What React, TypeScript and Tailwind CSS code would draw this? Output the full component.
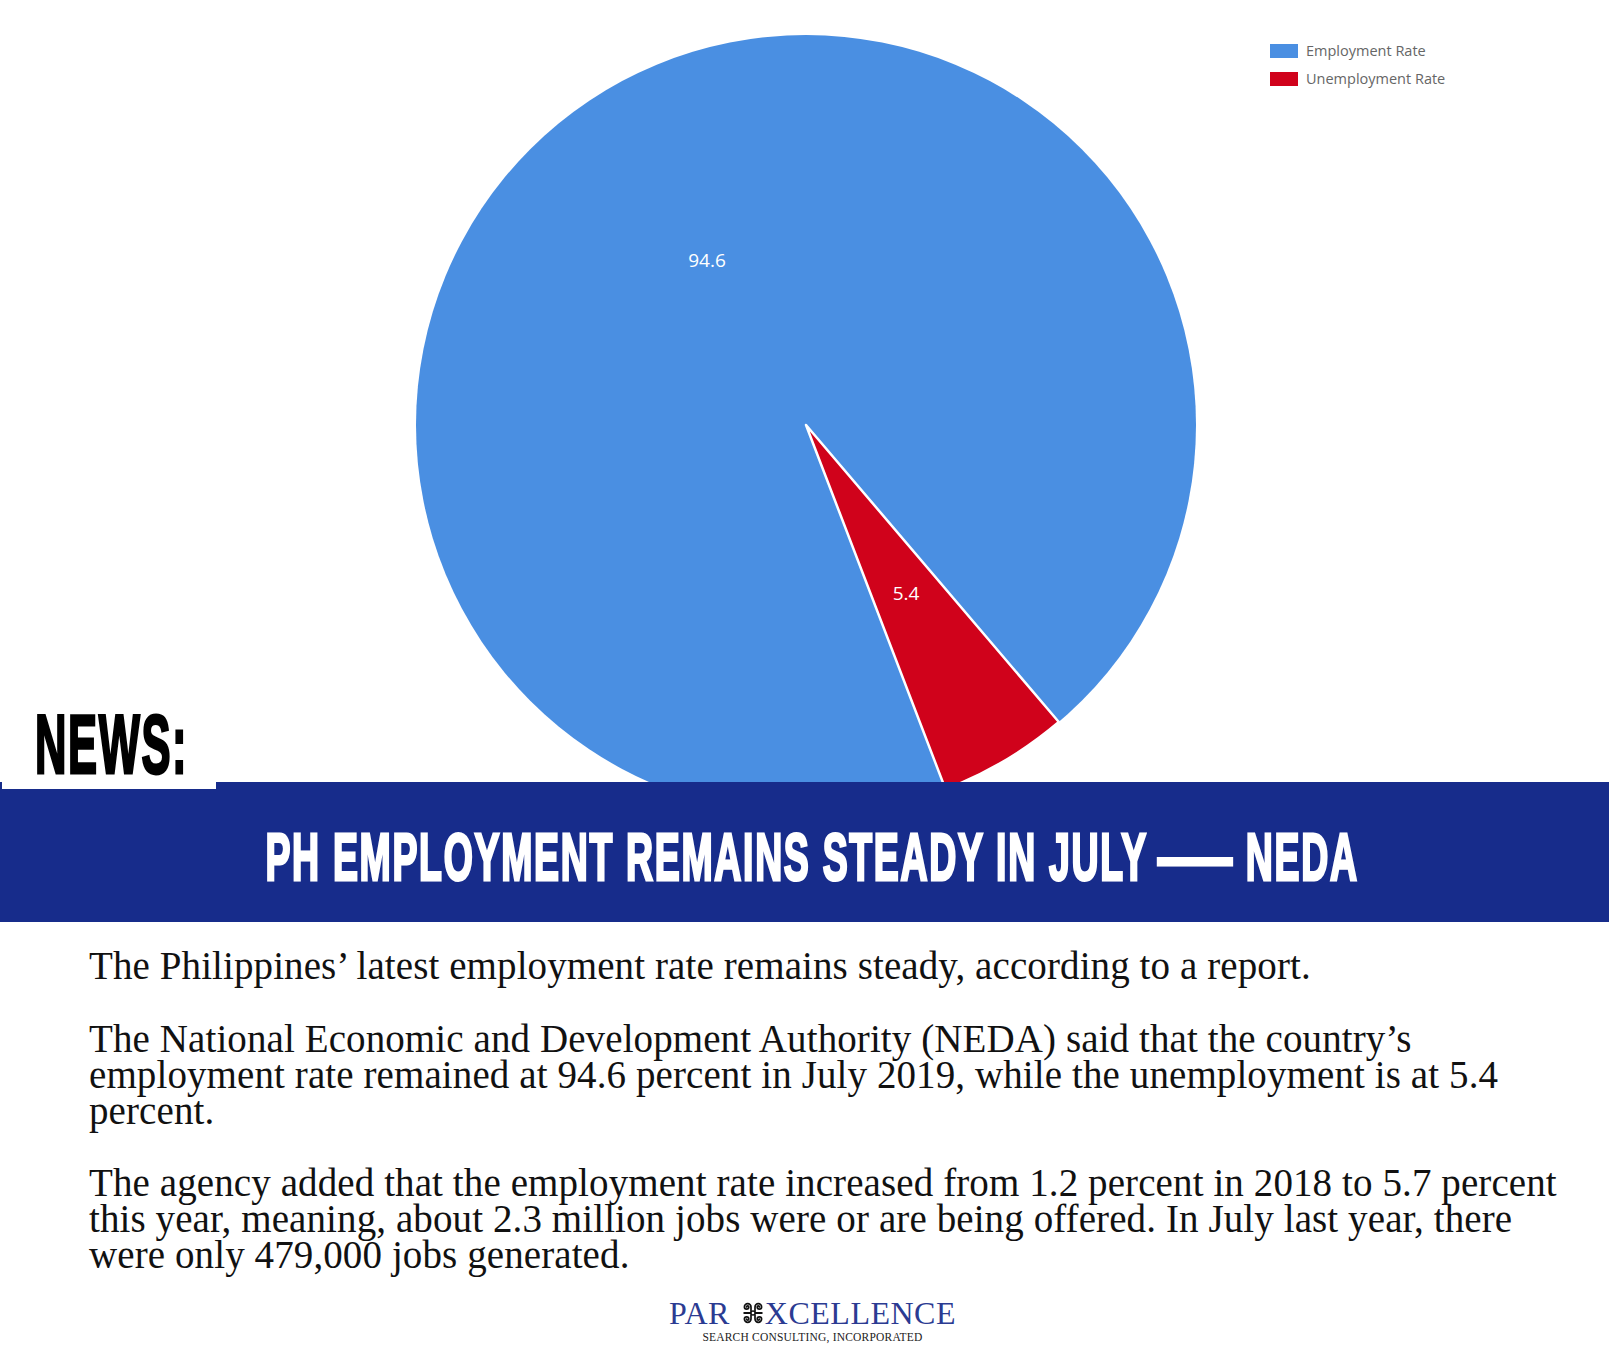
import React from "react";

const legend = [
  { label: "Employment Rate", color: "bg-[#4a8fe2]" },
  { label: "Unemployment Rate", color: "bg-[#d0021b]" },
];

// Adinkra-like spiral mark used in the company logo
const Spiral = ({ flipX = false, flipY = false }: { flipX?: boolean; flipY?: boolean }) => (
  <g transform={`translate(${flipX ? 22 : 0} ${flipY ? 22 : 0}) scale(${flipX ? -1 : 1} ${flipY ? -1 : 1})`}>
    <path
      d="M4.6 5 a1.1 1.1 0 0 1 2.2 0 a2.2 2.2 0 0 1 -4.4 0 a3.3 3.3 0 0 1 6.6 0 L9 9.2"
      fill="none"
      stroke="#111"
      strokeWidth="1.7"
      strokeLinecap="round"
    />
  </g>
);

const Mark = () => (
  <svg width="22" height="22" viewBox="0 0 22 22" className="inline-block ml-[12px] mr-[1px]">
    <Spiral />
    <Spiral flipX />
    <Spiral flipY />
    <Spiral flipX flipY />
    <rect x="1.5" y="10" width="19" height="2" fill="#111" />
    <circle cx="11" cy="11" r="2" fill="#fff" stroke="#111" strokeWidth="1.3" />
  </svg>
);

const PieChart = () => (
  <svg width="780" height="780" viewBox="0 0 780 780" className="ml-[3px] shrink-0">
    <circle cx="390" cy="390" r="390" fill="#4a8fe2" />
    <path
      d="M390 390 L642.8 687.0 A390 390 0 0 1 529.5 754.2 Z"
      fill="#d0021b"
      stroke="#fff"
      strokeWidth="2.5"
      strokeLinejoin="round"
    />
    <text
      x="291"
      y="225"
      textAnchor="middle"
      dominantBaseline="central"
      fill="#fff"
      style={{ fontFamily: '"Open Sans", sans-serif', fontSize: 19 }}
    >
      94.6
    </text>
    <text
      x="490"
      y="558"
      textAnchor="middle"
      dominantBaseline="central"
      fill="#fff"
      style={{ fontFamily: '"Open Sans", sans-serif', fontSize: 19 }}
    >
      5.4
    </text>
  </svg>
);

export default function App() {
  return (
    <div className="w-[1609px] h-[1365px] bg-white overflow-hidden">
      {/* chart area */}
      <section className="relative h-[782px]">
        <div className="h-full flex justify-center pt-[35px] overflow-hidden">
          <PieChart />
        </div>

        <div className="absolute top-[44px] left-[1270px] flex flex-col gap-[14px] font-['Open_Sans',sans-serif] text-[14.5px] text-[#666]">
          {legend.map((item) => (
            <div key={item.label} className="flex items-center gap-[8px] h-[14px]">
              <span className={`w-[28px] h-[14px] ${item.color}`} />
              <span className="leading-none">{item.label}</span>
            </div>
          ))}
        </div>

        {/* NEWS tab */}
        <div className="absolute left-[2px] bottom-[-7px] z-10 w-[214px] h-[90px] bg-white pt-[3px] pl-[33px]">
          <span className="inline-block origin-left scale-x-[0.519] font-['Liberation_Sans',sans-serif] font-bold text-[84px] leading-none tracking-[3px] text-black [-webkit-text-stroke:3px_black]">
            NEWS:
          </span>
        </div>
      </section>

      {/* headline band */}
      <header className="h-[140px] bg-[#172c8b] flex items-center justify-center pt-[10px] pl-[16px]">
        <h1 className="inline-block whitespace-nowrap scale-x-[0.567] font-['Liberation_Sans',sans-serif] font-bold text-[66px] leading-none tracking-[3px] text-white [-webkit-text-stroke:3px_white]">
          PH EMPLOYMENT REMAINS STEADY IN JULY{" "}
          <span className="inline-block scale-x-[1.95] mx-[31px]">—</span> NEDA
        </h1>
      </header>

      {/* article body */}
      <main className="pl-[89px] pt-[26px] font-['Liberation_Serif',serif] text-[39px] leading-[36px] tracking-[0.1px] text-[#111] whitespace-nowrap">
        <p>The Philippines’ latest employment rate remains steady, according to a report.</p>
        <p className="mt-[37px]">
          The National Economic and Development Authority (NEDA) said that the country’s
          <br />
          employment rate remained at 94.6 percent in July 2019, while the unemployment is at 5.4
          <br />
          percent.
        </p>
        <p className="mt-[36px]">
          The agency added that the employment rate increased from 1.2 percent in 2018 to 5.7 percent
          <br />
          this year, meaning, about 2.3 million jobs were or are being offered. In July last year, there
          <br />
          were only 479,000 jobs generated.
        </p>
      </main>

      {/* logo */}
      <footer className="mt-[24px] flex flex-col items-center pl-[16px] font-['Liberation_Serif',serif]">
        <div className="flex items-baseline text-[32px] leading-none text-[#2b3b92] tracking-[0.5px]">
          <span>PAR</span>
          <Mark />
          <span>XCELLENCE</span>
        </div>
        <div className="mt-[3px] text-[11.5px] leading-none uppercase text-[#222] tracking-[0.2px]">
          Search Consulting, Incorporated
        </div>
      </footer>
    </div>
  );
}
